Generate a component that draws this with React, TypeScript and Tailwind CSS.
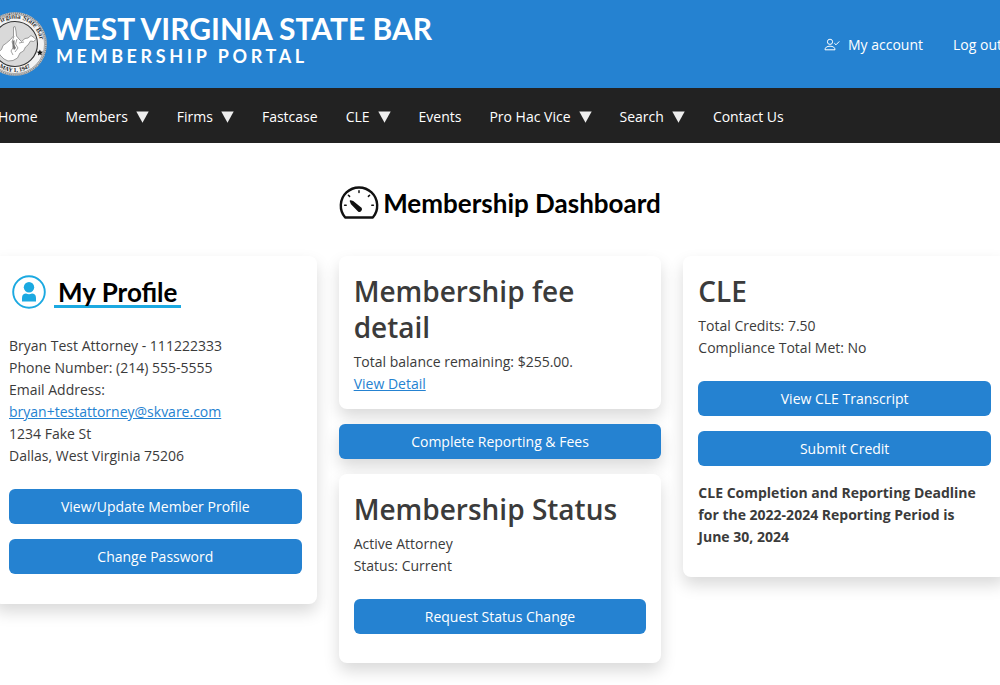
import type { ReactNode } from 'react';

const navItems = [
  { label: 'Home', hasMenu: false },
  { label: 'Members', hasMenu: true },
  { label: 'Firms', hasMenu: true },
  { label: 'Fastcase', hasMenu: false },
  { label: 'CLE', hasMenu: true },
  { label: 'Events', hasMenu: false },
  { label: 'Pro Hac Vice', hasMenu: true },
  { label: 'Search', hasMenu: true },
  { label: 'Contact Us', hasMenu: false },
];

function Seal() {
  return (
    <svg viewBox="0 0 64 64" className="h-16 w-16 shrink-0" aria-hidden="true">
      <defs>
        <path id="seal-top" d="M8.5 40 A25 25 0 1 1 55.5 40" />
        <path id="seal-bottom" d="M6 42 A27.8 27.8 0 0 0 58 42" />
      </defs>
      <circle cx="32" cy="32" r="31.8" fill="#c4c4c4" />
      <circle cx="32" cy="32" r="31" fill="none" stroke="#808080" strokeWidth="1.4" strokeDasharray="1 1" />
      <circle cx="32" cy="32" r="29.5" fill="#f3f3f3" stroke="#8a8a8a" strokeWidth="0.6" />
      <circle cx="32" cy="32" r="22.5" fill="#d9d9d9" stroke="#333" strokeWidth="1.1" />
      <path
        d="M30.5 15 L32 14.5 L33 19 L33.5 24 L36 27 L38.5 29.5 L42 26.5 L45 26 L48 23.5 L51 25.5 L53 27.5 L50.5 29.5 L47.5 29 L45 33 L42.5 35 L40.5 39 L37 41 L34.5 46 L30 48.5 L25 49 L21 47 L17 43 L15.5 40 L18.5 37.5 L20 33.5 L23.5 31 L27.5 27.5 L30.5 24 Z"
        fill="#fff"
        stroke="#858585"
        strokeWidth="0.8"
        strokeLinejoin="round"
      />
      <path
        d="M31 24 L29 30 L31 34 L28 39 L30 43 M34 27 L32.5 32 L35 36 L32 40 M36 31 L41 30"
        fill="none"
        stroke="#8a8a8a"
        strokeWidth="0.8"
      />
      <path d="M29.5 29 L31.5 28 L31.5 33 L33 36 L31 38 L29.5 35 Z" fill="#777" />
      <path d="M56.9 37.6 l0.9 2 2.2 0.2 -1.6 1.5 0.4 2.1 -1.9 -1.1 -1.9 1.1 0.4 -2.1 -1.6 -1.5 2.2 -0.2 Z" fill="#111" />
      <text fill="#333" fontSize="7" className="font-['Liberation_Serif',serif] font-bold">
        <textPath href="#seal-top" startOffset="50%" textAnchor="middle">
          West Virginia State Bar
        </textPath>
      </text>
      <text fill="#222" fontSize="6" className="font-['Liberation_Serif',serif] font-bold">
        <textPath href="#seal-bottom" startOffset="50%" textAnchor="middle">
          MAY 1, 1947
        </textPath>
      </text>
    </svg>
  );
}

function AccountIcon() {
  return (
    <svg viewBox="0 0 16 14" className="h-3.5 w-4" fill="none" stroke="currentColor" aria-hidden="true">
      <circle cx="6" cy="3.8" r="2.6" />
      <path d="M1 11.8 C1 9.4 3 8.2 6 8.2 S11 9.4 11 11.8 Z" />
      <path d="M10.3 5.2 L12 6.8 L15.3 3.4" />
    </svg>
  );
}

function GaugeIcon() {
  return (
    <svg viewBox="0 0 40 36" className="h-9 w-10" fill="none" stroke="#111" strokeLinecap="round" aria-hidden="true">
      <path
        d="M6.2 32.5 A18.2 18.2 0 1 1 33.8 32.5 Z"
        strokeWidth="2.4"
        strokeLinejoin="round"
      />
      <path d="M20 5.8 V7.6 M9.4 10.2 L10.6 11.4 M30.6 10.2 L29.4 11.4 M5.6 20.3 H7.2 M32.8 20.3 H34.4" strokeWidth="1.5" />
      <path d="M11.5 16 L14 16.8 L22 23.4 A1.9 1.9 0 0 1 19.6 26 L12.6 18.6 Z" fill="#111" strokeWidth="1.6" strokeLinejoin="round" />
    </svg>
  );
}

function ProfileIcon() {
  return (
    <svg viewBox="0 0 34 34" className="size-[34px]" aria-hidden="true">
      <circle cx="17" cy="17" r="15.8" fill="none" stroke="#1ba9e1" strokeWidth="1.9" />
      <circle cx="17" cy="12.3" r="5.2" fill="#1ba9e1" />
      <path d="M10 26.6 V23 C10 19.8 12 18.6 14 18.6 Q17 20 20 18.6 C22 18.6 24 19.8 24 23 V26.6 Z" fill="#1ba9e1" />
    </svg>
  );
}

function Card({ children, className = '' }: { children: ReactNode; className?: string }) {
  return (
    <section
      className={`rounded-lg bg-white px-[15px] pt-[17px] shadow-[0_8px_16px_rgba(0,0,0,0.15)] ${className}`}
    >
      {children}
    </section>
  );
}

function CardTitle({ children }: { children: ReactNode }) {
  return <h2 className="mb-1.5 text-[28px] leading-9 font-semibold">{children}</h2>;
}

function ActionLink({ children, className = '' }: { children: ReactNode; className?: string }) {
  return (
    <a
      href="#"
      className={`block rounded-md bg-[#2582d1] text-center leading-[35px] text-white hover:bg-[#1f72b8] ${className}`}
    >
      {children}
    </a>
  );
}

export default function App() {
  return (
    <div className="min-h-screen overflow-hidden bg-white font-['Open_Sans','Noto_Sans',sans-serif] text-sm leading-[22px] text-[#3b3b3b]">
      <header className="flex h-[88px] items-center justify-between bg-[#2582d1] text-white">
        <a href="#" className="-ml-[17px] flex items-center gap-[5px] font-['Lato',sans-serif] font-bold">
          <Seal />
          <span className="pb-2">
            <span className="block text-[30px] leading-8">WEST VIRGINIA STATE BAR</span>
            <span className="block pl-1 text-lg leading-6 tracking-[0.2em]">MEMBERSHIP PORTAL</span>
          </span>
        </a>
        <div className="-mr-0.5 flex shrink-0 items-center gap-[30px] pt-0.5 whitespace-nowrap">
          <a href="#" className="flex items-center gap-2">
            <AccountIcon />
            My account
          </a>
          <a href="#">Log out</a>
        </div>
      </header>

      <nav className="bg-[#222] text-white">
        <ul className="-ml-0.5 flex h-[55px] items-center gap-7 pt-0.5 whitespace-nowrap">
          {navItems.map((item) => (
            <li key={item.label}>
              <a href="#" className="flex items-center gap-2">
                {item.label}
                {item.hasMenu && (
                  <svg viewBox="0 0 13 12" className="h-3 w-[13px]" fill="#eee" aria-hidden="true">
                    <path d="M0.3 0.5 H12.7 L6.5 11.8 Z" />
                  </svg>
                )}
              </a>
            </li>
          ))}
        </ul>
      </nav>

      <main className="-mx-1.5 pt-10">
        <div className="flex items-center justify-center gap-1 pb-[33px] text-black">
          <GaugeIcon />
          <h1 className="font-['Lato',sans-serif] text-[26px] leading-10 font-bold">Membership Dashboard</h1>
        </div>

        <div className="grid grid-cols-3 items-start gap-[22px]">
          <Card className="pb-[30px]">
            <div className="mb-[26px] flex items-start gap-2 pt-0.5 pl-[3px] text-black">
              <ProfileIcon />
              <h2 className="border-b-[3px] border-[#1ba9e1] px-1 pt-1 font-['Lato',sans-serif] text-[26px] leading-[26px] font-bold">
                My Profile
              </h2>
            </div>
            <p>Bryan Test Attorney - 111222333</p>
            <p>Phone Number: (214) 555-5555</p>
            <p>Email Address:</p>
            <p>
              <a href="mailto:bryan+testattorney@skvare.com" className="text-[#2582d1] underline">
                bryan+testattorney@skvare.com
              </a>
            </p>
            <p>1234 Fake St</p>
            <p>Dallas, West Virginia 75206</p>
            <div className="mt-[22px] space-y-[15px]">
              <ActionLink>View/Update Member Profile</ActionLink>
              <ActionLink>Change Password</ActionLink>
            </div>
          </Card>

          <div className="space-y-[15px]">
            <Card className="pb-3.5">
              <CardTitle>Membership fee detail</CardTitle>
              <p>Total balance remaining: $255.00.</p>
              <p>
                <a href="#" className="text-[#2582d1] underline">
                  View Detail
                </a>
              </p>
            </Card>
            <ActionLink className="shadow-[0_8px_16px_rgba(0,0,0,0.15)]">
              Complete Reporting &amp; Fees
            </ActionLink>
            <Card className="pb-[29px]">
              <CardTitle>Membership Status</CardTitle>
              <p>Active Attorney</p>
              <p>Status: Current</p>
              <ActionLink className="mt-[22px]">Request Status Change</ActionLink>
            </Card>
          </div>

          <Card className="pb-[29px]">
            <CardTitle>CLE</CardTitle>
            <p>Total Credits: 7.50</p>
            <p>Compliance Total Met: No</p>
            <div className="mt-[22px] space-y-[15px]">
              <ActionLink>View CLE Transcript</ActionLink>
              <ActionLink>Submit Credit</ActionLink>
            </div>
            <p className="mt-4 pr-3 font-bold">
              CLE Completion and Reporting Deadline for the 2022-2024 Reporting Period is June 30, 2024
            </p>
          </Card>
        </div>
      </main>
    </div>
  );
}
